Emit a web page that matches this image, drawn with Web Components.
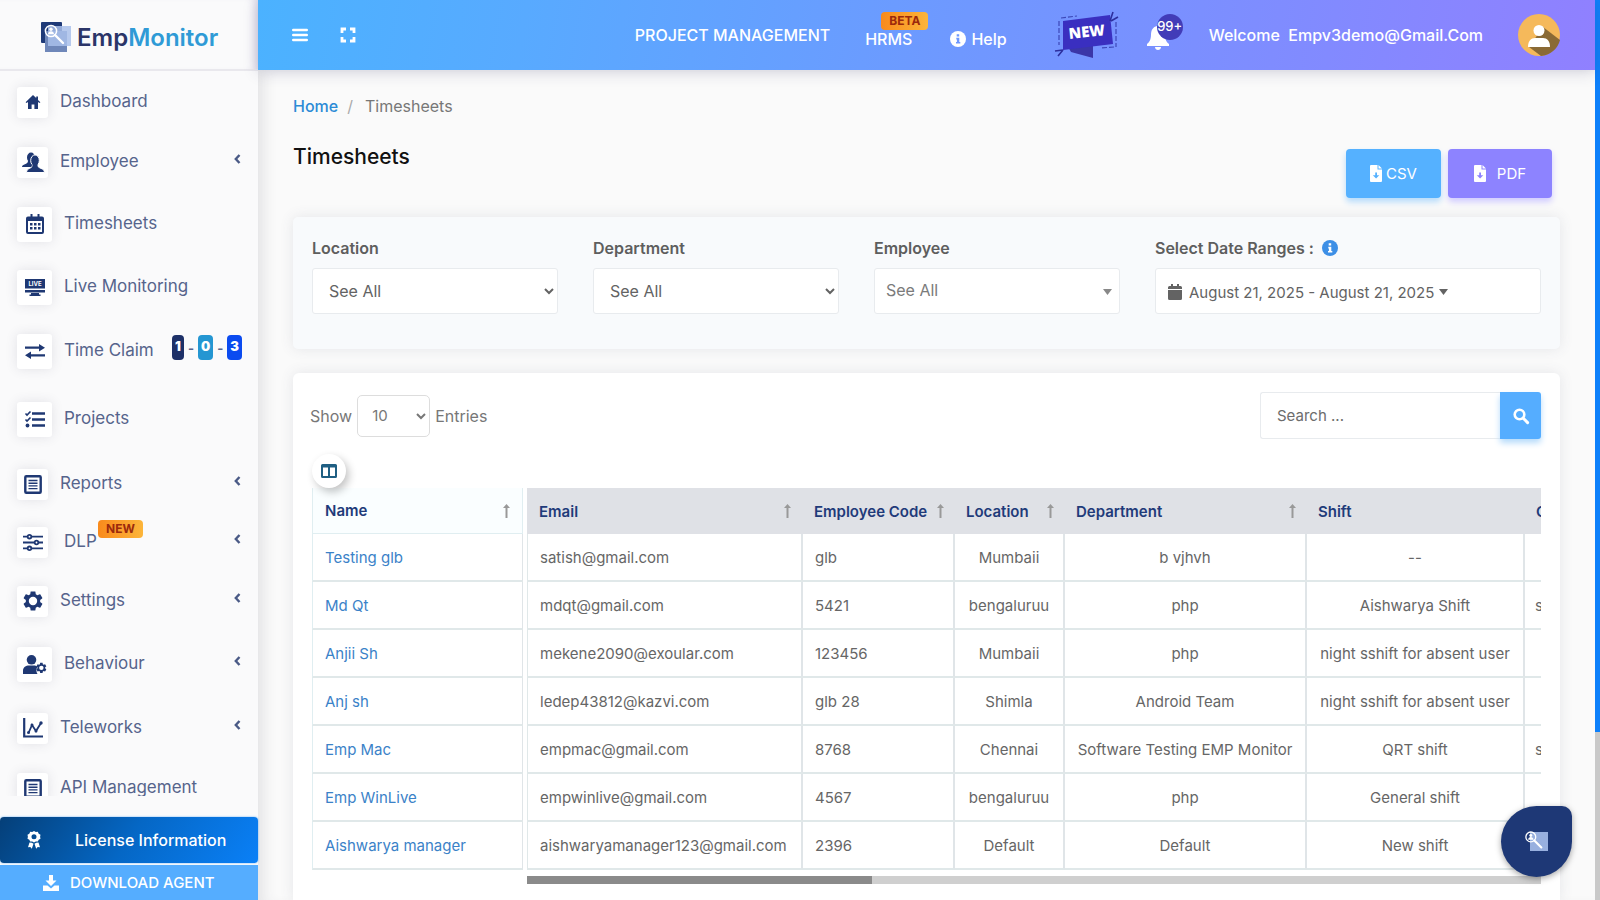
<!DOCTYPE html>
<html lang="en">
<head>
<meta charset="utf-8">
<title>EmpMonitor - Timesheets</title>
<style>
  html, body { margin: 0; height: 100%; }
  body { font-family: Inter, "Open Sans", sans-serif; font-size: 15px; color: #666; background: #fafafa; overflow: hidden; }
</style>
</head>
<body>
<app-shell>
  <side-bar slot="side"></side-bar>
  <top-bar slot="top"></top-bar>
  <page-head></page-head>
  <filter-panel></filter-panel>
  <timesheet-card></timesheet-card>
</app-shell>
<script>
const define = (name, html, setup) => {
  const template = document.createElement('template');
  template.innerHTML = '<style>:host,*{box-sizing:border-box}a{color:inherit;text-decoration:none}button,input,select{font:inherit;color:inherit}</style>' + html;
  customElements.define(name, class extends HTMLElement {
    constructor() {
      super();
      this.attachShadow({ mode: 'open' }).append(template.content.cloneNode(true));
    }
    connectedCallback() { if (setup) setup.call(this, this.shadowRoot); }
  });
};

const gear = 'M19.14 12.94c.04-.3.06-.61.06-.94 0-.32-.02-.64-.07-.94l2.03-1.58c.18-.14.23-.41.12-.61l-1.92-3.32c-.12-.22-.37-.29-.59-.22l-2.39.96c-.5-.38-1.03-.7-1.62-.94l-.36-2.54c-.04-.24-.24-.41-.48-.41h-3.84c-.24 0-.43.17-.47.41l-.36 2.54c-.59.24-1.13.57-1.62.94l-2.39-.96c-.22-.08-.47 0-.59.22L2.74 8.87c-.12.21-.08.47.12.61l2.03 1.58c-.05.3-.09.63-.09.94s.02.64.07.94l-2.03 1.58c-.18.14-.23.41-.12.61l1.92 3.32c.12.22.37.29.59.22l2.39-.96c.5.38 1.03.7 1.62.94l.36 2.54c.05.24.24.41.48.41h3.84c.24 0 .44-.17.47-.41l.36-2.54c.59-.24 1.13-.56 1.62-.94l2.39.96c.22.08.47 0 .59-.22l1.92-3.32c.12-.22.07-.47-.12-.61l-2.01-1.58zM12 16.2a4.2 4.2 0 1 1 0-8.4 4.2 4.2 0 0 1 0 8.4z';
const magnifier = '<circle cx="10" cy="9" r="5.6" fill="none" stroke="#fff" stroke-width="1.5"/><circle cx="10" cy="7.300" r="1.700" fill="#fff"/><path d="M7 12.200c0-4 6-4 6 0z" fill="#fff"/><path d="M14 13l8 8" stroke="#fff" stroke-width="2.400" stroke-linecap="round"/>';

const icons = {
  bars: [16, 14, '<path d="M1.200 2h13.600M1.200 7h13.600M1.200 12h13.600" stroke="currentColor" stroke-width="2.400" stroke-linecap="round"/>'],
  expand: [16, 16, '<path d="M2 6V2h4M10 2h4v4M14 10v4h-4M6 14H2v-4" fill="none" stroke="currentColor" stroke-width="2.800"/>'],
  home: [16, 16, '<path d="M8 1L.6 8.200l1 .9L3 7.900V15h3.600v-4.400h2.800V15H13V7.900l1.400 1.200 1-.9-2.400-2.300V2.500h-1.800v1.600z" fill="currentColor"/>'],
  users: [22, 20, '<ellipse cx="9" cy="5.500" rx="4" ry="5"/><path d="M0 15c0-3 6-2.500 6-6h6v6z"/><g stroke="#fff" stroke-width="1"><path d="M4.500 20.500c0-5 6-3.500 6-7.500h5c0 4 7 2.500 7 7.500z"/><ellipse cx="13" cy="8.500" rx="4.300" ry="5.600"/></g><path d="M10.500 12h5v3.500h-5z"/>'],
  calendar: [18, 20, '<path d="M4.500 0h2v2.500h5V0h2v2.500H16a2 2 0 0 1 2 2V18a2 2 0 0 1-2 2H2a2 2 0 0 1-2-2V4.500a2 2 0 0 1 2-2h2.500zM2 7v11h14V7zm2 2h2.500v2.500H4zm4 0h2.500v2.500H8zm4 0h2.500v2.500H12zM4 13h2.500v2.500H4zm4 0h2.500v2.500H8zm4 0h2.500v2.500H12z" fill-rule="evenodd"/>'],
  live: [20, 17, '<path d="M0 0h20v9.500H0zM0 11h20v2.500H0zM6 14h8v1.500h1.500V17h-11v-1.500H6z"/><text x="10" y="7" font-size="6" font-weight="700" fill="#fff" text-anchor="middle" font-family="Inter, sans-serif">LIVE</text>'],
  swap: [20, 15, '<path d="M0 2.600h14V0l6 3.700-6 3.700V4.800H0zM20 10.200H6V7.600l-6 3.700L6 15v-2.600h14z"/>'],
  tasks: [20, 17, '<path d="M7 2.500h13M7 8.500h13M7 14.500h13" stroke="currentColor" stroke-width="2.400"/><path d="M.5 2.500L2 4l3.500-3.500M.5 8.500L2 10l3.500-3.500" fill="none" stroke="currentColor" stroke-width="1.600"/><circle cx="2.500" cy="14.500" r="1.900"/>'],
  list: [18, 19, '<rect x="1.300" y="1.300" width="15.400" height="16.400" rx="1" fill="none" stroke="currentColor" stroke-width="2.400"/><path d="M4.500 5.500h9M4.500 8.200h9M4.500 10.900h9M4.500 13.600h9" stroke="currentColor" stroke-width="1.400"/>'],
  sliders: [20, 17, '<g fill="#fff" stroke="currentColor" stroke-width="1.800"><path d="M0 2.700h20M0 8.500h20M0 14.300h20"/><circle cx="6.500" cy="2.700" r="1.800"/><circle cx="13.500" cy="8.500" r="1.800"/><circle cx="6.500" cy="14.300" r="1.800"/></g>'],
  gear: [20, 20, `<path transform="translate(-2 -2)" d="${gear}"/>`],
  usergear: [24, 19, `<circle cx="8.500" cy="4.800" r="4.800"/><path d="M0 19v-3c0-4 3-5.500 6-5.500h5c1.500 0 3 .5 3.500 1.500-1.500 2-1.500 4.500 0 7z"/><path transform="translate(12 6.500) scale(.53)" d="${gear}"/>`],
  chart: [20, 20, '<path d="M1.200 0v18.500H20" fill="none" stroke="currentColor" stroke-width="2.200"/><path d="M5.500 15l3.500-8 4 6 5-8" fill="none" stroke="currentColor" stroke-width="1.800"/><circle cx="5.500" cy="14.500" r="1.500"/><circle cx="9" cy="7" r="1.500"/><circle cx="13" cy="13" r="1.500"/><circle cx="18" cy="5" r="1.700"/>'],
  chevron: [7, 10, '<path d="M5.500 1L1.800 5l3.700 4" fill="none" stroke="currentColor" stroke-width="2.400"/>'],
  award: [14, 18, '<path d="M7 0l1.800 1 2-.2.900 1.900 1.800 1-.4 2 .4 2-1.800 1-.9 1.900-2-.2-1.800 1-1.800-1-2 .2-.9-1.900-1.800-1 .4-2-.4-2 1.800-1L3.200.8l2 .2zm0 3.200a2.500 2.500 0 1 0 0 5 2.500 2.500 0 0 0 0-5z" fill-rule="evenodd"/><path d="M2.500 11.500l2.300.2 1.700 1-1.700 5-1.500-1.800-2.300.3zM11.500 11.500l-2.300.2-1.700 1 1.700 5 1.500-1.800 2.300.3z"/>'],
  download: [16, 16, '<path d="M6 0h4v5.500h3.500L8 11 2.500 5.500H6z"/><path d="M0 10.500h4.500L8 13.500l3.500-3H16V16H0z"/>'],
  info: [16, 16, '<circle cx="8" cy="8" r="8"/><path d="M6.300 6.800h3v4.200h1v1.600H6V11h.9V8.400h-.6zM6.700 3.200h2.500v2.300H6.700z" fill="var(--hole, #6e98ff)"/>'],
  bell: [22, 26, '<path d="M10 0h2v2c4 1 6 4 6 8.500 0 5 1.500 7.500 4 9.500v2H0v-2c2.500-2 4-4.500 4-9.500C4 6 6 3 10 2z"/><path d="M8 23h6c0 4-6 4-6 0z"/>'],
  file: [12, 17, '<path d="M1 0h6.500v4.500H12V16a1 1 0 0 1-1 1H1a1 1 0 0 1-1-1V1a1 1 0 0 1 1-1zM8.500 0L12 3.500H8.500z"/><path d="M5.200 7.500h1.800v2.700h2.300L6.100 13.500 2.800 10.200h2.400z" fill="var(--hole)"/>'],
  date: [14, 16, '<path d="M3 0h2v2h4V0h2v2h1.500A1.500 1.500 0 0 1 14 3.500V5H0V3.500A1.500 1.500 0 0 1 1.500 2H3zM0 6h14v8.500a1.500 1.500 0 0 1-1.500 1.500h-11A1.500 1.500 0 0 1 0 14.500z"/>'],
  caret: [9, 6, '<path d="M0 0h9L4.500 6z"/>'],
  search: [16, 16, '<circle cx="6.500" cy="6.500" r="4.800" fill="none" stroke="currentColor" stroke-width="2.600"/><path d="M10 10l4.600 4.600" stroke="currentColor" stroke-width="3" stroke-linecap="round"/>'],
  columns: [16, 14, '<path d="M1.500 0h13A1.500 1.500 0 0 1 16 1.500v11a1.500 1.500 0 0 1-1.500 1.500h-13A1.500 1.500 0 0 1 0 12.500v-11A1.500 1.500 0 0 1 1.500 0zM2 3.500V12h5V3.500zm7 0V12h5V3.500z" fill-rule="evenodd"/>'],
  sort: [7, 14, '<path d="M3.500 0L7 4H4.500v10h-2V4H0z"/>'],
  mark: [30, 30, `<rect width="21" height="21" rx="1" fill="#1f3a78"/><rect x="4" y="9" width="22" height="21" fill="#6f87b9"/><rect x="7" y="4" width="23" height="20" fill="#a9bfea" opacity=".85"/>${magnifier}`],
  markLight: [24, 22, `<rect x="5" y="1" width="18" height="19" fill="#98b0df"/><g transform="translate(-3 -2) scale(.88)">${magnifier}</g>`],
  avatar: [42, 42, '<circle cx="21" cy="21" r="21" fill="#f5b95b"/><path d="M25 13l17 13A21 21 0 0 1 23 42L11 33z" fill="#8a6a35"/><circle cx="21" cy="16.500" r="5.500" fill="#fff"/><path d="M10 33c0-6 3-9 7-9h8c4 0 7 3 7 9z" fill="#fff"/>'],
  sticker: [64, 46, '<path d="M12 33l26-2v15L16 40z" fill="#3b36a8"/><path d="M8 9L55 3l3 29-50 6z" fill="#3a2fc0"/><g fill="none" stroke="#3c48b8" stroke-width="1.200" stroke-dasharray="5 2"><path d="M4 9v24M6 6l16-2M61 10v25M59 35l-14 1"/></g><path d="M55 9l3-9M56 9l7-4M0 39l8-1M3 44l5-6" stroke="#2d2f9e" stroke-width="1.600"/><text x="32" y="25" transform="rotate(-6 32 22)" font-family="Open Sans, sans-serif" font-size="15" font-weight="800" fill="#fff" text-anchor="middle">NEW</text>']
};

define('ui-icon', '<style>:host{display:inline-flex;flex:none;box-sizing:content-box}svg{display:block;fill:currentColor;overflow:visible}</style>', function (root) {
  const [w, h, body] = icons[this.getAttribute('name')];
  root.innerHTML += `<svg width="${w}" height="${h}" viewBox="0 0 ${w} ${h}" aria-hidden="true">${body}</svg>`;
});

define('tag-badge', `<style>
  :host{display:inline-block;padding:0 8px;border-radius:4px;line-height:18px;font-size:12px;font-weight:700;color:#9c2a0c;background:linear-gradient(90deg,#f98a1c,#fcb53a)}
</style><slot></slot>`);

define('nav-item', `<style>
  :host{display:block}
  a{display:flex;align-items:center;height:100%;padding:0 17px;font-size:17px;font-weight:400;color:#56648c}
  .box{display:flex;align-items:center;justify-content:center;height:var(--box,31px);width:var(--box,31px);margin-right:12px;background:#fff;border-radius:3px;box-shadow:0 0 12px rgba(60,60,90,.13);color:#1f3873;flex:none}
  .chev{margin-left:auto;padding-bottom:6px;color:#4a5a86}
  .text{position:relative;white-space:nowrap;line-height:22px;padding-bottom:2px}
  :host([large]){--box:35px}
  :host([inset]) .text{margin-left:4px}
</style><a href="#"><span class="box"></span><span class="text"><slot></slot></span></a>`, function (root) {
  root.querySelector('.box').innerHTML = `<ui-icon name="${this.getAttribute('icon')}"></ui-icon>`;
  if (this.hasAttribute('more')) root.querySelector('a').insertAdjacentHTML('beforeend', '<ui-icon class="chev" name="chevron"></ui-icon>');
});

define('side-bar', `<style>
  :host{display:flex;flex-direction:column;height:100%;background:#fafafb}
  .logo{display:flex;align-items:center;gap:6px;height:71px;flex:none;padding:5px 0 0 41px;font-size:24px;color:#2b3568;border-bottom:2px solid #e9e8ed;box-shadow:inset -9px 0 8px -6px #d9d6e6;font-weight:600}
  .logo span{color:#2f9ad6}
  nav{flex:1;overflow:hidden;padding-top:2px;display:flex;flex-direction:column}
  nav-item{flex:none;height:58px}
  .h62{height:62px}.h64{height:64px}.h72{height:72px}.h60{height:60px}.h66{height:66px}
  .counts{position:absolute;left:108px;top:-4px;display:flex;align-items:center;gap:4px;font-size:13px;font-weight:700}
  .counts b{color:#fff;line-height:22px;padding:0 3px 3px;border-radius:4px}
  tag-badge{position:absolute;left:34px;top:-10px}
  .license{display:flex;align-items:center;height:46px;margin:21px 0 2px;padding-left:27px;border-radius:4px;background:linear-gradient(125deg,#053f78,#0567c5 50%,#0a80f7);color:#fff;font-weight:500;font-size:16px;gap:34px;flex:none;box-shadow:0 0 2px #57a9f5}
  .agent{display:flex;align-items:center;gap:11px;height:35px;padding-left:43px;background:#55adff;color:#fff;font-weight:500;font-size:15px;flex:none}
</style>
<a class="logo" href="#"><ui-icon name="mark"></ui-icon><div>Emp<span>Monitor</span></div></a>
<nav>
  <nav-item icon="home">Dashboard</nav-item>
  <nav-item class="h62" icon="users" more>Employee</nav-item>
  <nav-item class="h62" icon="calendar" large>Timesheets</nav-item>
  <nav-item class="h64" icon="live" large>Live Monitoring</nav-item>
  <nav-item class="h64" icon="swap" large>Time Claim<span class="counts"><b style="background:#1d3068">1</b>-<b style="background:#2496d2">0</b>-<b style="background:#0b4bf0">3</b></span></nav-item>
  <nav-item class="h72" icon="tasks" large>Projects</nav-item>
  <nav-item icon="list" more>Reports</nav-item>
  <nav-item icon="sliders" more inset>DLP<tag-badge>NEW</tag-badge></nav-item>
  <nav-item class="h60" icon="gear" more>Settings</nav-item>
  <nav-item class="h66" icon="usergear" large more>Behaviour</nav-item>
  <nav-item class="h62" icon="chart" more>Teleworks</nav-item>
  <nav-item icon="list">API Management</nav-item>
</nav>
<a class="license" href="#"><ui-icon name="award"></ui-icon>License Information</a>
<a class="agent" href="#"><ui-icon name="download"></ui-icon>DOWNLOAD AGENT</a>`);

define('top-bar', `<style>
  :host{display:flex;align-items:center;height:70px;padding:0 35px 0 34px;background:linear-gradient(100deg,#4bb2ff,#58aaff 20%,#7494ff 60%,#9080ff);color:#fff;font-size:16px;font-weight:500;box-shadow:0 2px 14px rgba(60,60,110,.22);white-space:nowrap}
  button{display:flex;border:0;background:none;padding:0;color:#fff}
  .full{margin-left:32px}
  .links{display:flex;align-items:center;margin-left:auto}
  .hrms{position:relative;margin:8px 38px 0 35px}
  .hrms tag-badge{position:absolute;left:16px;top:-17px}
  .help{display:flex;align-items:center;gap:5px;margin:8px 48px 0 0}
  .bell{position:relative;margin:4px 40px 0 28px}
  .count{position:absolute;left:10px;top:-10px;width:26px;height:26px;border-radius:50%;background:#423cb8;font-size:13px;line-height:24px;text-align:center}
  .who{margin-right:35px;white-space:pre}
</style>
<button aria-label="Menu"><ui-icon name="bars"></ui-icon></button>
<button class="full" aria-label="Full screen"><ui-icon name="expand"></ui-icon></button>
<div class="links">
  <a href="#">PROJECT MANAGEMENT</a>
  <a class="hrms" href="#">HRMS<tag-badge>BETA</tag-badge></a>
  <a class="help" href="#"><ui-icon name="info"></ui-icon>Help</a>
  <ui-icon name="sticker"></ui-icon>
  <button class="bell" aria-label="Notifications"><ui-icon name="bell"></ui-icon><span class="count">99+</span></button>
  <span class="who">Welcome  Empv3demo@Gmail.Com</span>
  <button aria-label="Account"><ui-icon name="avatar"></ui-icon></button>
</div>`);

define('page-head', `<style>
  :host{display:block;padding-top:26px}
  .crumbs{display:flex;gap:9px;line-height:20px;font-size:16px;color:#777}
  .crumbs a{color:#2c8bd6;font-weight:500}.crumbs i{font-style:normal;color:#aaa;margin-right:3px}
  .row{display:flex;align-items:flex-start;justify-content:space-between;margin-top:29px}
  h1{margin:0;font-size:21px;line-height:24px;font-weight:500;color:#111}
  .buttons{display:flex;gap:7px;padding:4px 8px 19px 0}
  button{display:flex;align-items:center;justify-content:center;height:49px;border:0;border-radius:4px;color:#fff;font-size:15px}
  .csv{width:95px;gap:4px;background:#55b1ff;--hole:#55b1ff;box-shadow:0 4px 6px #b5dbfb}
  .pdf{width:104px;gap:11px;background:#8d83ff;--hole:#8d83ff;box-shadow:0 4px 6px #d0cbff}
</style>
<div class="crumbs"><a href="#">Home</a><i>/</i><span>Timesheets</span></div>
<div class="row"><h1>Timesheets</h1><div class="buttons">
  <button class="csv"><ui-icon name="file"></ui-icon>CSV</button>
  <button class="pdf"><ui-icon name="file"></ui-icon>PDF</button>
</div></div>`);

define('filter-panel', `<style>
  :host{display:grid;grid-template-columns:246fr 246fr 246fr 386fr;gap:35px;height:132px;padding:19px;background:#f8fafc;border-radius:5px;box-shadow:0 0 14px rgba(70,80,110,.12);flex:none}
  .field{display:flex;flex-direction:column;gap:8px;min-width:0}
  label,.label{display:flex;align-items:center;gap:8px;line-height:24px;font-size:16px;font-weight:600;color:#5e5e5e}
  .label ui-icon{color:#3d8fe6;--hole:#fff}
  select,button{width:100%;height:46px;border:1px solid #e8ebee;border-radius:3px;background:#fff;color:#636363;font-size:15px;padding:0 0 0 12px}
  select{font-size:16px}
  .plain{position:relative}
  .plain select{appearance:none;padding:0 0 2px 11px;color:#7b7b7b}
  .plain ui-icon{position:absolute;right:8px;top:21px;color:#888}
  button{display:flex;align-items:center;gap:7px;padding:2px 0 0 12px}
  button ui-icon:last-child{margin-left:-2px}
</style>
<div class="field"><label for="loc">Location</label><select id="loc"><option>See All</option></select></div>
<div class="field"><label for="dep">Department</label><select id="dep"><option>See All</option></select></div>
<div class="field"><label for="emp">Employee</label><div class="plain"><select id="emp"><option>See All</option></select><ui-icon name="caret"></ui-icon></div></div>
<div class="field"><div class="label" id="range">Select Date Ranges :<ui-icon name="info"></ui-icon></div><button aria-labelledby="range"><ui-icon name="date"></ui-icon><span>August 21, 2025 - August 21, 2025</span><ui-icon name="caret"></ui-icon></button></div>`);

const people = [
  ['Testing glb', 'satish@gmail.com', 'glb', 'Mumbaii', 'b vjhvh', '--', ''],
  ['Md Qt', 'mdqt@gmail.com', '5421', 'bengaluruu', 'php', 'Aishwarya Shift', 's'],
  ['Anjii Sh', 'mekene2090@exoular.com', '123456', 'Mumbaii', 'php', 'night sshift for absent user', ''],
  ['Anj sh', 'ledep43812@kazvi.com', 'glb 28', 'Shimla', 'Android Team', 'night sshift for absent user', ''],
  ['Emp Mac', 'empmac@gmail.com', '8768', 'Chennai', 'Software Testing EMP Monitor', 'QRT shift', 's'],
  ['Emp WinLive', 'empwinlive@gmail.com', '4567', 'bengaluruu', 'php', 'General shift', ''],
  ['Aishwarya manager', 'aishwaryamanager123@gmail.com', '2396', 'Default', 'Default', 'New shift', '']
];

define('timesheet-table', `<style>
  :host{display:flex;align-items:flex-start;gap:4px;min-width:0}
  table{border-collapse:separate;border-spacing:0;table-layout:fixed;font-size:15px}
  th{height:46px;padding:0 12px;text-align:left;font-weight:600;color:#1f3b7a;white-space:nowrap}
  th div{display:flex;align-items:center;justify-content:space-between}
  th ui-icon{color:#999}
  td{height:48px;padding:0 12px;text-align:center;border-bottom:2px solid #e0e8e9;border-right:2px solid #e0e5e8;white-space:nowrap}
  .names{width:211px;flex:none}
  .names th{background:#fafeff;border:1px solid #e0eef1;border-top:0}
  .names td{text-align:left;color:#3b82c8;border-width:0 1px 2px;border-left:1px solid #e0eef1}
  .scroll{flex:1;min-width:0;overflow:hidden}
  .rest{width:1198px}
  .rest th{background:#dfe1e6}
  .rest th:nth-child(2),.rest th:nth-child(2)~th{padding:0 11px}
  .rest td:nth-child(2)~td{padding:0 10px}
  .rest td:nth-child(-n+2),.rest td:last-child{text-align:left}
  .rest td:first-child{border-left:1px solid #e0e8e9}
  .track{height:8px;margin-top:6px;background:#cfcfcf}
  .thumb{width:34%;height:8px;background:#8a8a8a}
</style>
<table class="names"><thead><tr><th><div>Name<ui-icon name="sort"></ui-icon></div></th></tr></thead><tbody></tbody></table>
<div class="scroll">
  <table class="rest">
    <colgroup><col width="276"><col width="152"><col width="110"><col width="242"><col width="218"><col width="200"></colgroup>
    <thead><tr>
      <th><div>Email<ui-icon name="sort"></ui-icon></div></th><th><div>Employee Code<ui-icon name="sort"></ui-icon></div></th>
      <th><div>Location<ui-icon name="sort"></ui-icon></div></th><th><div>Department<ui-icon name="sort"></ui-icon></div></th>
      <th>Shift</th><th>C</th>
    </tr></thead><tbody></tbody>
  </table>
  <div class="track"><div class="thumb"></div></div>
</div>`, function (root) {
  const [names, rest] = root.querySelectorAll('tbody');
  for (const [name, ...cells] of people) {
    names.insertAdjacentHTML('beforeend', `<tr><td><a href="#">${name}</a></td></tr>`);
    rest.insertAdjacentHTML('beforeend', `<tr>${cells.map(c => `<td>${c}</td>`).join('')}</tr>`);
  }
});

define('timesheet-card', `<style>
  :host{display:block;flex:1;margin-top:24px;padding:19px 19px 0;background:#fff;border-radius:6px 6px 0 0;box-shadow:0 0 14px rgba(70,80,110,.12)}
  .tools{display:flex;justify-content:space-between;align-items:center;height:47px}
  .show{display:flex;align-items:center;gap:5px;color:#777;font-size:16px;margin-left:-2px}
  .show select{width:73px;height:42px;padding-left:10px;border:1px solid #ddd;border-radius:5px;background:#fff;color:#777;font-size:15px}
  form{display:flex;width:281px;height:47px}
  input{flex:1;min-width:0;border:1px solid #e8ebee;border-right:0;border-radius:3px 0 0 3px;padding:0 16px;font-size:15px}
  input::placeholder{color:#6c6c6c;opacity:1}
  form button{display:flex;align-items:center;justify-content:center;width:41px;border:0;border-radius:0 3px 3px 0;background:#55adff;color:#fff;box-shadow:0 4px 6px #b5dbfb}
  .cols{position:relative;display:flex;align-items:center;justify-content:center;width:34px;height:34px;margin-top:15px;padding:0;border:0;border-radius:50%;background:#fff;color:#1f5f83;box-shadow:3px 4px 8px rgba(0,0,0,.24)}
</style>
<div class="tools">
  <div class="show"><label for="count">Show</label><select id="count"><option>10</option></select><span>Entries</span></div>
  <form><input type="text" placeholder="Search ..." aria-label="Search"><button type="button" aria-label="Search"><ui-icon name="search"></ui-icon></button></form>
</div>
<button class="cols" aria-label="Columns"><ui-icon name="columns"></ui-icon></button>
<timesheet-table></timesheet-table>`);

define('app-shell', `<style>
  :host{display:grid;grid-template:70px minmax(0,1fr)/258px minmax(0,1fr) 5px;height:100vh}
  .side{grid-row:1/3;min-height:0;position:relative}
  .top{position:relative;grid-column:2}
  main{grid-column:2;grid-row:2;display:flex;flex-direction:column;min-height:0;padding:0 35px;background:#fafafa;box-shadow:inset 14px 0 14px -8px #e4e4e6}
  .bar{grid-column:3;grid-row:1/3;background:#c9c9c9}
  .bar div{height:732px;max-height:100%;background:#0d80fb}
  .chat{position:fixed;right:28px;bottom:23px;width:71px;height:71px;display:flex;align-items:center;justify-content:center;border:0;border-radius:50% 10px 50% 50%;background:#1e3876;box-shadow:0 2px 6px rgba(0,0,0,.35)}
</style>
<div class="side"><slot name="side"></slot></div>
<div class="top"><slot name="top"></slot></div>
<main><slot></slot></main>
<div class="bar"><div></div></div>
<button class="chat" aria-label="Chat"><ui-icon name="markLight"></ui-icon></button>`);
</script>
</body>
</html>
